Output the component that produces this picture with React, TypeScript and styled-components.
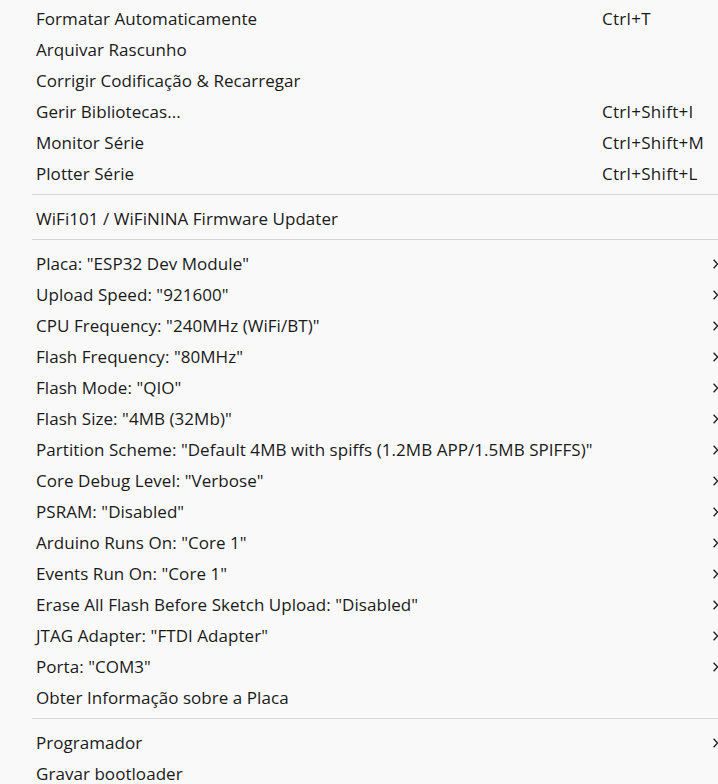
import React from "react";
import styled, { createGlobalStyle } from "styled-components";

const Global = createGlobalStyle`
  html, body { margin: 0; padding: 0; background: #f9f9f9; }
  body { font-family: "Open Sans", "Noto Sans", sans-serif; }
`;

const Menu = styled.div`
  width: 718px;
  height: 784px;
  overflow: hidden;
  background: #f9f9f9;
  padding-top: 3px;
  box-sizing: border-box;
  display: flex;
  flex-direction: column;
`;

const Row = styled.div`
  height: 31px;
  flex: 0 0 31px;
  display: grid;
  grid-template-columns: 566px 1fr 5px;
  align-items: center;
  padding-left: 36px;
  box-sizing: border-box;
  color: #1a1a1a;
  font-size: 17px;
  line-height: 31px;
  white-space: nowrap;
`;

const Label = styled.span`
  letter-spacing: 0.05px;
`;
const Shortcut = styled.span`
  letter-spacing: 0.3px;
`;

const Arrow = styled.span`
  display: flex;
  justify-content: flex-start;
  align-items: center;
  overflow: visible;
`;

const Separator = styled.div`
  height: 1px;
  flex: 0 0 1px;
  margin: 5px 0 8px 32px;
  background: #d6d6d6;
`;

const Chevron = () => (
  <svg width="6" height="10" viewBox="0 0 6 10" style={{ flex: "none" }}>
    <path d="M0.6 0.8 L4.6 5 L0.6 9.2" fill="none" stroke="#1a1a1a" strokeWidth="1.3" />
  </svg>
);

type Item = { label: string; shortcut?: string; sub?: boolean } | "sep";

const items: Item[] = [
  { label: "Formatar Automaticamente", shortcut: "Ctrl+T" },
  { label: "Arquivar Rascunho" },
  { label: "Corrigir Codificação & Recarregar" },
  { label: "Gerir Bibliotecas...", shortcut: "Ctrl+Shift+I" },
  { label: "Monitor Série", shortcut: "Ctrl+Shift+M" },
  { label: "Plotter Série", shortcut: "Ctrl+Shift+L" },
  "sep",
  { label: "WiFi101 / WiFiNINA Firmware Updater" },
  "sep",
  { label: 'Placa: "ESP32 Dev Module"', sub: true },
  { label: 'Upload Speed: "921600"', sub: true },
  { label: 'CPU Frequency: "240MHz (WiFi/BT)"', sub: true },
  { label: 'Flash Frequency: "80MHz"', sub: true },
  { label: 'Flash Mode: "QIO"', sub: true },
  { label: 'Flash Size: "4MB (32Mb)"', sub: true },
  { label: 'Partition Scheme: "Default 4MB with spiffs (1.2MB APP/1.5MB SPIFFS)"', sub: true },
  { label: 'Core Debug Level: "Verbose"', sub: true },
  { label: 'PSRAM: "Disabled"', sub: true },
  { label: 'Arduino Runs On: "Core 1"', sub: true },
  { label: 'Events Run On: "Core 1"', sub: true },
  { label: 'Erase All Flash Before Sketch Upload: "Disabled"', sub: true },
  { label: 'JTAG Adapter: "FTDI Adapter"', sub: true },
  { label: 'Porta: "COM3"', sub: true },
  { label: "Obter Informação sobre a Placa" },
  "sep",
  { label: "Programador", sub: true },
  { label: "Gravar bootloader" },
];

export default function App() {
  return (
    <>
      <Global />
      <Menu>
        {items.map((it, i) =>
          it === "sep" ? (
            <Separator key={i} />
          ) : (
            <Row key={i}>
              <Label>{it.label}</Label>
              <Shortcut>{it.shortcut ?? ""}</Shortcut>
              <Arrow>{it.sub ? <Chevron /> : null}</Arrow>
            </Row>
          )
        )}
      </Menu>
    </>
  );
}
